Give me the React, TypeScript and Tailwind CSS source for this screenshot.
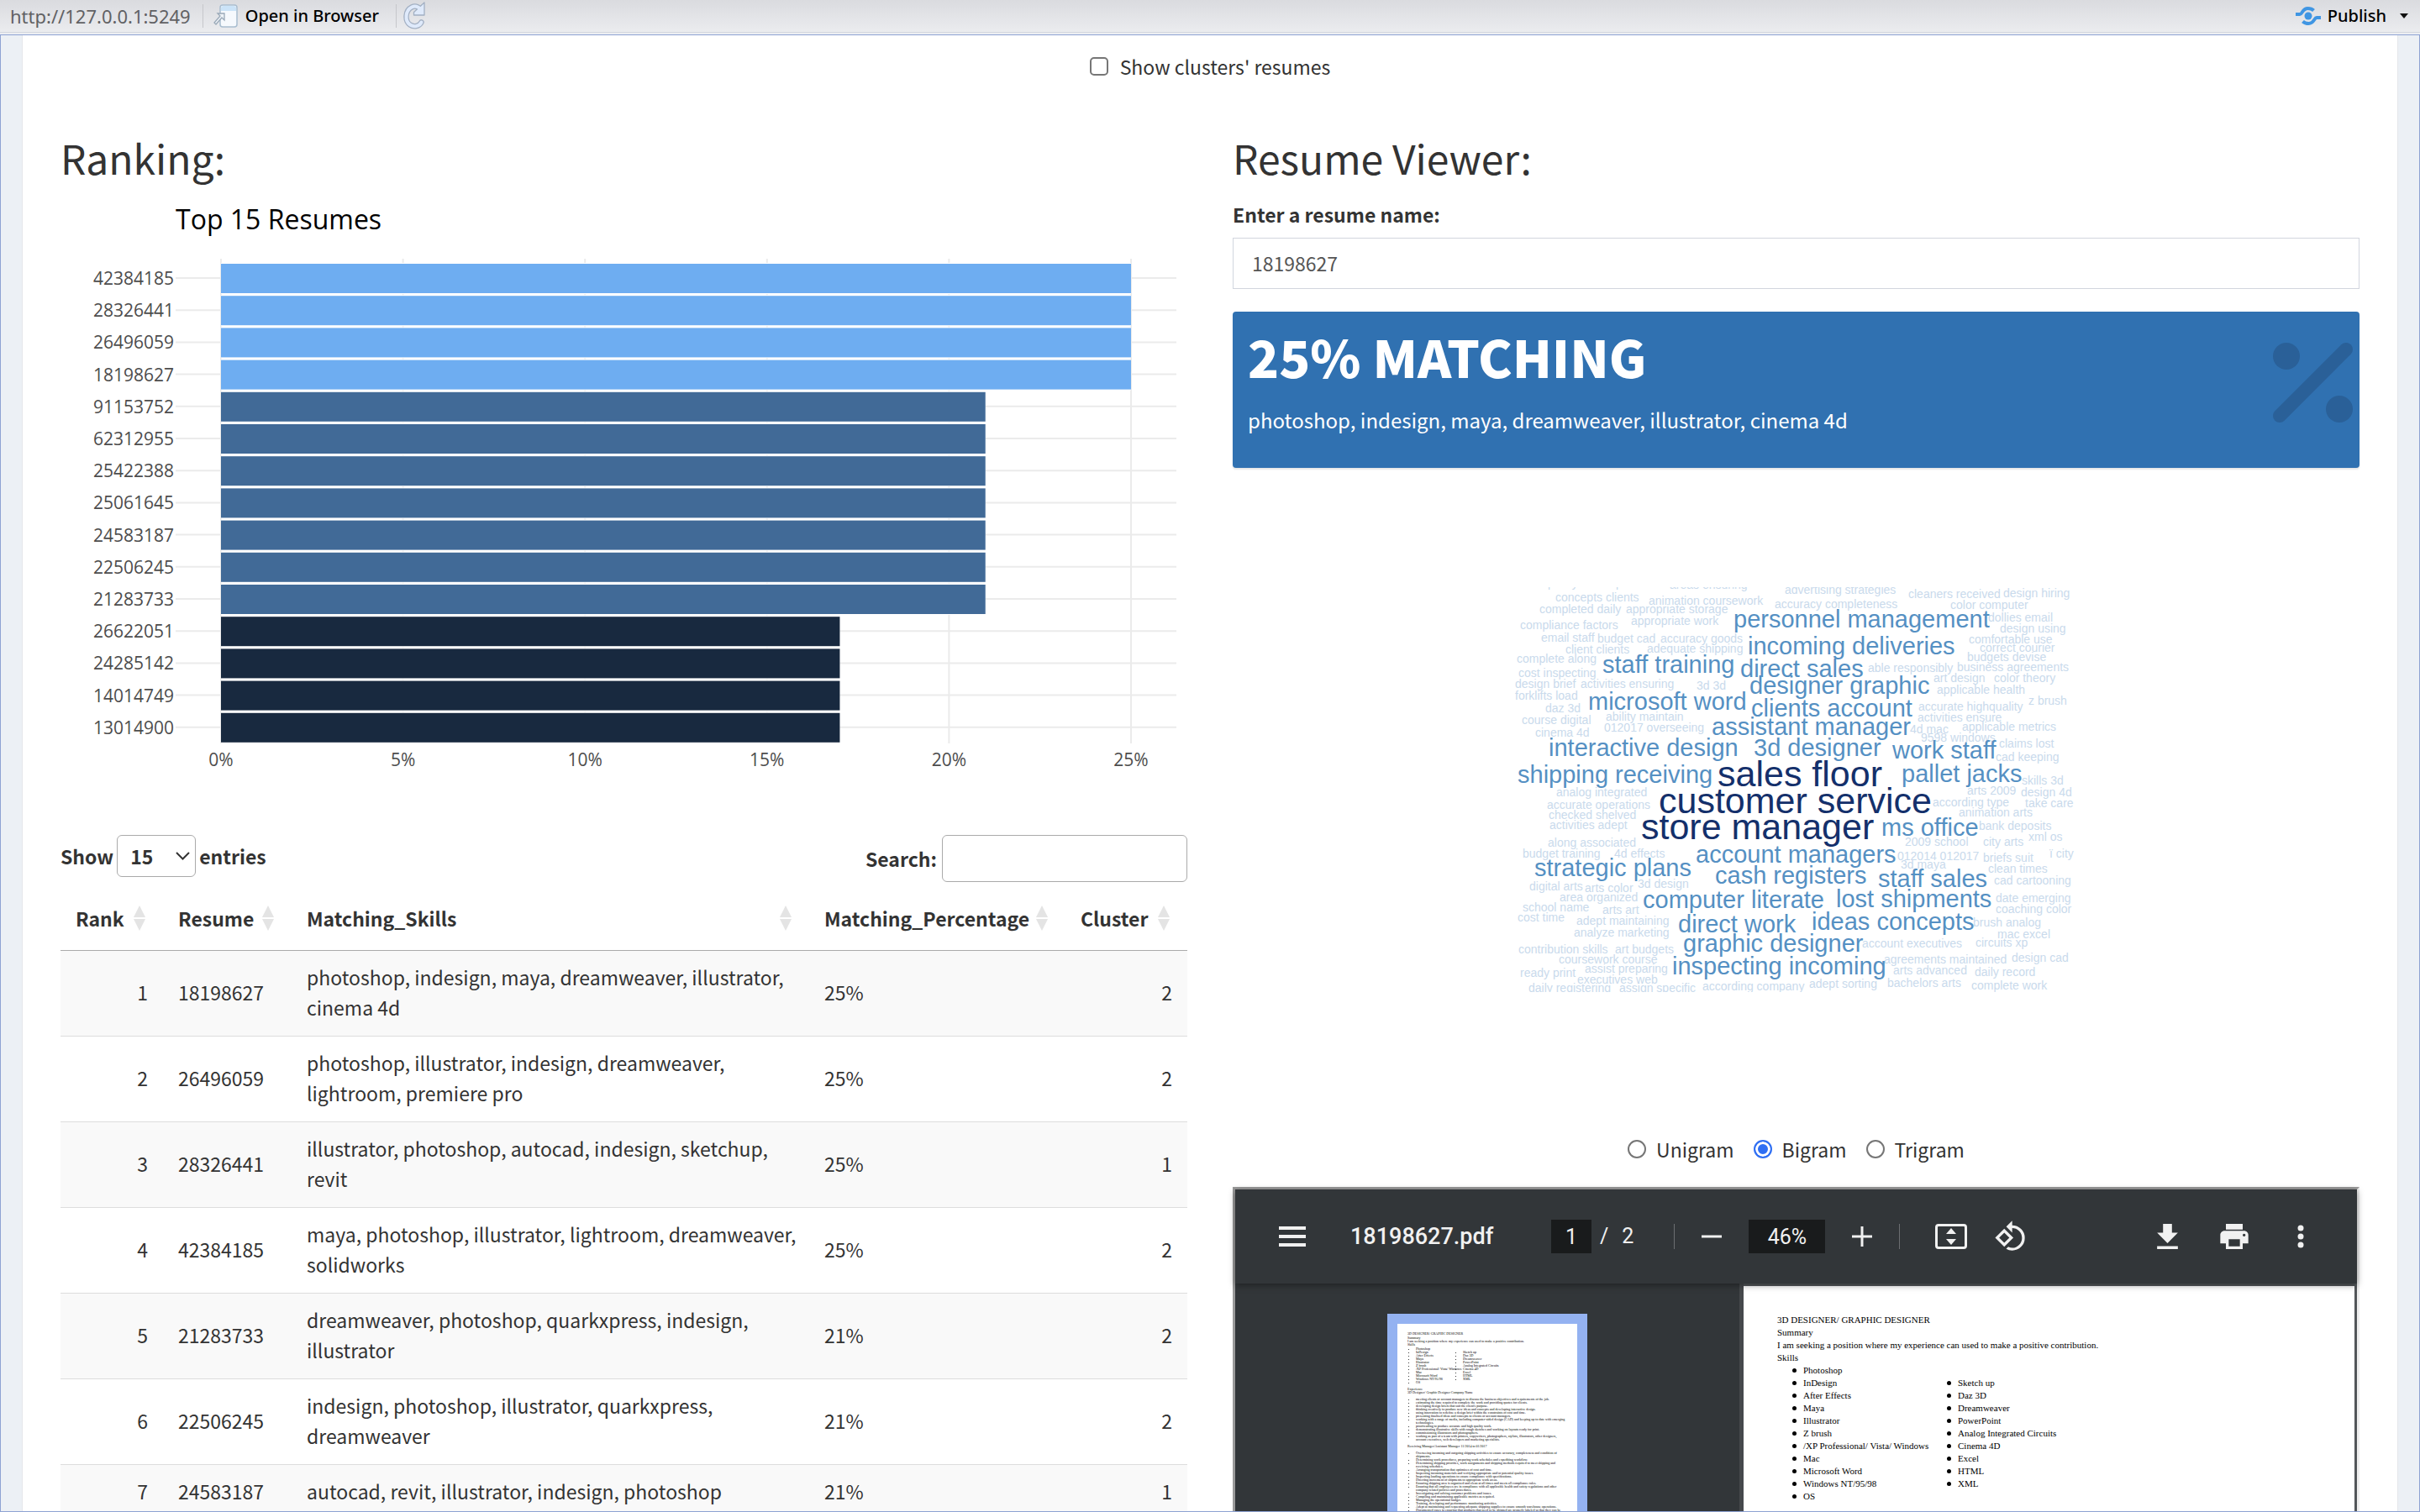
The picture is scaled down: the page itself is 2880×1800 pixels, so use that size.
import React from "react";

const ranking = [
  { name: "42384185", pct: 25 },
  { name: "28326441", pct: 25 },
  { name: "26496059", pct: 25 },
  { name: "18198627", pct: 25 },
  { name: "91153752", pct: 21 },
  { name: "62312955", pct: 21 },
  { name: "25422388", pct: 21 },
  { name: "25061645", pct: 21 },
  { name: "24583187", pct: 21 },
  { name: "22506245", pct: 21 },
  { name: "21283733", pct: 21 },
  { name: "26622051", pct: 17 },
  { name: "24285142", pct: 17 },
  { name: "14014749", pct: 17 },
  { name: "13014900", pct: 17 },
];

const barColor: Record<number, string> = { 25: "#6eadf1", 21: "#416a97", 17: "#18293f" };

const rows = [
  [1, "18198627", "photoshop, indesign, maya, dreamweaver, illustrator, cinema 4d", "25%", 2],
  [2, "26496059", "photoshop, illustrator, indesign, dreamweaver, lightroom, premiere pro", "25%", 2],
  [3, "28326441", "illustrator, photoshop, autocad, indesign, sketchup, revit", "25%", 1],
  [4, "42384185", "maya, photoshop, illustrator, lightroom, dreamweaver, solidworks", "25%", 2],
  [5, "21283733", "dreamweaver, photoshop, quarkxpress, indesign, illustrator", "21%", 2],
  [6, "22506245", "indesign, photoshop, illustrator, quarkxpress, dreamweaver", "21%", 2],
  [7, "24583187", "autocad, revit, illustrator, indesign, photoshop", "21%", 1],
] as const;

type Word = [string, number, number];

const largeWords: Word[] = [
  ["sales floor", 248, 237],
  ["customer service", 178, 269],
  ["store manager", 157, 300],
];

const mediumWords: Word[] = [
  ["personnel management", 267, 48],
  ["incoming deliveries", 284, 80],
  ["staff training", 111, 102],
  ["direct sales", 275, 107],
  ["designer graphic", 286, 127],
  ["microsoft word", 94, 146],
  ["clients account", 288, 154],
  ["assistant manager", 241, 176],
  ["interactive design", 47, 201],
  ["3d designer", 291, 201],
  ["work staff", 456, 204],
  ["shipping receiving", 10, 233],
  ["pallet jacks", 467, 232],
  ["ms office", 443, 296],
  ["account managers", 222, 328],
  ["strategic plans", 30, 344],
  ["cash registers", 245, 353],
  ["staff sales", 439, 357],
  ["computer literate", 159, 382],
  ["lost shipments", 389, 381],
  ["direct work", 201, 411],
  ["ideas concepts", 360, 408],
  ["graphic designer", 207, 434],
  ["inspecting incoming", 194, 461],
];

const smallWords: Word[] = [
  ["policy develop", 46, 0],
  ["areas ensuring", 191, 2],
  ["concepts clients", 55, 17],
  ["animation coursework", 166, 21],
  ["completed daily", 36, 31],
  ["appropriate storage", 139, 31],
  ["appropriate work", 145, 45],
  ["compliance factors", 13, 50],
  ["email staff", 38, 65],
  ["budget cad", 105, 66],
  ["accuracy goods", 180, 66],
  ["client clients", 67, 79],
  ["adequate shipping", 164, 78],
  ["complete along", 9, 90],
  ["cost inspecting", 11, 107],
  ["design brief", 7, 120],
  ["activities ensuring", 85, 120],
  ["3d 3d", 223, 122],
  ["forklifts load", 7, 134],
  ["daz 3d", 43, 149],
  ["course digital", 15, 163],
  ["ability maintain", 115, 159],
  ["012017 overseeing", 113, 172],
  ["cinema 4d", 31, 178],
  ["advertising strategies", 328, 8],
  ["accuracy completeness", 316, 25],
  ["cleaners received", 475, 13],
  ["design hiring", 588, 12],
  ["color computer", 525, 26],
  ["dollies email", 570, 41],
  ["design using", 584, 54],
  ["comfortable use", 547, 67],
  ["correct courier", 560, 77],
  ["budgets devise", 545, 88],
  ["able responsibly", 427, 101],
  ["business agreements", 533, 100],
  ["art design", 505, 113],
  ["color theory", 577, 113],
  ["applicable health", 509, 127],
  ["z brush", 618, 140],
  ["accurate highquality", 487, 147],
  ["activities ensure", 486, 160],
  ["4d mac", 477, 174],
  ["applicable metrics", 539, 171],
  ["9598 windows", 490, 184],
  ["claims lost", 583, 191],
  ["cad keeping", 579, 207],
  ["skills 3d", 610, 235],
  ["analog integrated", 56, 249],
  ["accurate operations", 45, 264],
  ["checked shelved", 47, 276],
  ["activities adept", 48, 288],
  ["along associated", 46, 309],
  ["budget training", 16, 322],
  ["4d effects", 125, 322],
  ["digital arts", 24, 361],
  ["arts color", 90, 363],
  ["3d design", 153, 358],
  ["area organized", 60, 374],
  ["school name", 16, 386],
  ["arts art", 111, 389],
  ["cost time", 10, 398],
  ["adept maintaining", 80, 402],
  ["analyze marketing", 77, 416],
  ["contribution skills", 11, 436],
  ["art budgets", 126, 436],
  ["coursework course", 59, 448],
  ["assist preparing", 90, 459],
  ["ready print", 13, 464],
  ["executives web", 81, 472],
  ["daily registering", 23, 482],
  ["assign specific", 131, 482],
  ["according company", 230, 480],
  ["arts 2009", 545, 247],
  ["design 4d", 609, 249],
  ["according type", 504, 261],
  ["take care", 614, 262],
  ["animation arts", 535, 273],
  ["bank deposits", 559, 289],
  ["2009 school", 471, 308],
  ["city arts", 564, 308],
  ["xml os", 618, 302],
  ["012014 012017", 462, 325],
  ["3d maya", 466, 335],
  ["briefs suit", 564, 327],
  ["ï city", 643, 322],
  ["clean times", 570, 340],
  ["cad cartooning", 577, 354],
  ["date emerging", 579, 375],
  ["coaching color", 579, 388],
  ["brush analog", 552, 404],
  ["mac excel", 581, 418],
  ["account executives", 420, 429],
  ["circuits xp", 555, 428],
  ["agreements maintained", 446, 448],
  ["design cad", 598, 446],
  ["arts advanced", 457, 461],
  ["daily record", 554, 463],
  ["adept sorting", 357, 477],
  ["bachelors arts", 450, 476],
  ["complete work", 550, 479],
];

const skillsLeft = ["InDesign", "After Effects", "Maya", "Illustrator", "Z brush", "/XP Professional/ Vista/ Windows", "Mac", "Microsoft Word", "Windows NT/95/98", "OS"];
const skillsRight = ["Sketch up", "Daz 3D", "Dreamweaver", "PowerPoint", "Analog Integrated Circuits", "Cinema 4D", "Excel", "HTML", "XML"];

const designerDuties = [
  "meeting clients or account managers to discuss the business objectives and requirements of the job.",
  "estimating the time required to complete the work and providing quotes for clients.",
  "developing design briefs that suit the client's purpose.",
  "thinking creatively to produce new ideas and concepts and developing interactive design.",
  "using innovation to redefine a design brief within the constraints of cost and time.",
  "presenting finalised ideas and concepts to clients or account managers.",
  "working with a range of media, including computer-aided design (CAD) and keeping up to date with emerging technologies.",
  "proofreading to produce accurate and high quality work.",
  "demonstrating illustrative skills with rough sketches and working on layouts ready for print.",
  "commissioning illustrators and photographers.",
  "working as part of a team with printers, copywriters, photographers, stylists, illustrators, other designers, account executives, web developers and marketing specialists.",
];

const managerDuties = [
  "Overseeing incoming and outgoing shipping activities to ensure accuracy, completeness and condition of shipments.",
  "Determining work procedures, preparing work schedules and expediting workflow.",
  "Determining shipping priorities, work assignments and shipping methods required to meet shipping and receiving schedules.",
  "Arranging transportation that optimizes of cost and time.",
  "Inspecting incoming materials and verifying appropriate and/or potential quality issues.",
  "Inspecting loading operations to ensure compliance with specifications.",
  "Directing movement of shipments to appropriate work areas.",
  "Ensuring shipping area is organized and clean at all times and meets all compliance rules.",
  "Ensuring that all employees are in compliance with all applicable health and safety regulations and other company related policies and procedures.",
  "Investigating and solving customer problems and issues.",
  "Compiling and maintaining applicable metrics as required.",
  "Managing the operational budget.",
  "Training, developing and performance monitoring activities.",
  "Adept at maintaining and requesting adequate shipping supplies to ensure smooth warehouse operations.",
  "Documented cases to ensuring that products that need to be shipped are properly labeled so that they can be delivered to the correct",
];

function TopBar() {
  return (
    <header className="flex h-[38px] shrink-0 items-center bg-linear-to-b from-[#dadbdf] to-[#ebecef] pr-3 pl-3 font-['Noto_Sans'] text-[20px] text-black">
      <span className="text-[22px] text-[#616164]">http://127.0.0.1:5249</span>
      <span className="ml-[14px] h-7 w-px bg-[#c6c7cb]" />
      <button className="ml-3 flex items-center gap-2 font-medium">
        <svg width="30" height="28" viewBox="0 0 30 28" fill="none">
          <rect x="8" y="1" width="20" height="26" rx="3" fill="#f6f9fd" stroke="#a9bdd0" strokeWidth="1.5" />
          <path d="M9 8V5a3 3 0 0 1 3-3h12a3 3 0 0 1 3 3v3z" fill="#cbe3f8" />
          <path d="M5 11h8v8l-3-3-7 8-2-2 7-8z" fill="#eef2f7" stroke="#9aa9b8" strokeWidth="1.3" />
        </svg>
        Open in Browser
      </button>
      <span className="ml-5 h-7 w-px bg-[#c6c7cb]" />
      <button aria-label="Refresh" className="ml-2">
        <svg width="28" height="36" viewBox="0 0 28 36" fill="none">
          <path d="M20 9.500C17 6.500 13 6 10 7.500C2 11.500 1.500 24 8 28.500C12.500 31.500 19 30.500 21.500 25.500" stroke="#a3b0c3" strokeWidth="6.500" strokeLinecap="round" />
          <path d="M25 2v15H12.500v-3.500z" fill="#dfeafb" stroke="#a3b0c3" strokeWidth="1.300" strokeLinejoin="round" />
          <path d="M20 9.500C17 6.500 13 6 10 7.500C2 11.500 1.500 24 8 28.500C12.500 31.500 19 30.500 21.500 25.500" stroke="#dfeafb" strokeWidth="4" strokeLinecap="round" />
        </svg>
      </button>
      <button className="ml-auto flex items-center gap-2 font-medium">
        <svg width="30" height="24" viewBox="0 0 30 24" fill="none" stroke="#4096e3" strokeWidth="4">
          <circle cx="15" cy="12" r="4.500" fill="#4096e3" stroke="none" />
          <path d="M0 10H5C8 10 8 3 14.500 3C18 3 20 4 21.500 5.500" />
          <path d="M30 14H25C22 14 22 21 15.500 21C12 21 10 20 8.500 18.500" />
        </svg>
        Publish
        <svg className="ml-2 mr-[2px]" width="10" height="6" viewBox="0 0 10 6">
          <path d="M0 0h10L5 6z" fill="#111" />
        </svg>
      </button>
    </header>
  );
}

function RankingChart() {
  const x0 = 191;
  const perPct = 43.32;
  return (
    <svg viewBox="0 0 1341 740" className="h-auto w-full font-['Open_Sans']" role="img" aria-label="Top 15 Resumes">
      <text x="137" y="56" fontSize="32" fill="#000">Top 15 Resumes</text>
      {ranking.map((r, i) => (
        <line key={r.name} x1="137" x2="1328" y1={114 + i * 38.2} y2={114 + i * 38.2} stroke="#ebebeb" strokeWidth="2" />
      ))}
      {[0, 5, 10, 15, 20, 25].map((t) => (
        <g key={t}>
          <line x1={x0 + t * perPct} x2={x0 + t * perPct} y1="91" y2="668" stroke="#ebebeb" strokeWidth="2" />
          <text x={x0 + t * perPct} y="695" fontSize="21" fill="#4d4d4d" textAnchor="middle">{t}%</text>
        </g>
      ))}
      {ranking.map((r, i) => (
        <g key={r.name}>
          <rect x={x0} y={96 + i * 38.2} width={r.pct * perPct} height="37" fill="#fff" />
          <rect x={x0} y={97 + i * 38.2} width={r.pct * perPct} height="35" fill={barColor[r.pct]} />
          <text x="135" y={122 + i * 38.2} fontSize="21" fill="#4d4d4d" textAnchor="end">{r.name}</text>
        </g>
      ))}
    </svg>
  );
}

function SortIcon() {
  return (
    <svg width="14" height="30" viewBox="0 0 14 30" fill="#e4e4e4" className="shrink-0">
      <path d="M7 0l7 14H0z" />
      <path d="M7 30l7-14H0z" />
    </svg>
  );
}

function RankingTable() {
  const heads: [string, string][] = [
    ["Rank", "w-[122px]"],
    ["Resume", "w-[153px]"],
    ["Matching_Skills", ""],
    ["Matching_Percentage", "w-[305px]"],
    ["Cluster", "w-[145px]"],
  ];
  return (
    <section>
      <div className="mt-[37px] flex items-start justify-between font-bold">
        <label className="flex h-[50px] items-center gap-1">
          Show
          <span className="relative">
            <select defaultValue="15" className="h-[50px] w-[94px] appearance-none rounded-md border border-[#aaa] bg-white pl-[15px] font-bold">
              <option>15</option>
              <option>25</option>
              <option>50</option>
            </select>
            <svg className="pointer-events-none absolute top-[20px] right-[7px]" width="17" height="10" viewBox="0 0 17 10" fill="none" stroke="#333" strokeWidth="2">
              <path d="M1 1l7.500 7.500L16 1" />
            </svg>
          </span>
          entries
        </label>
        <label className="flex items-center gap-[6px]">
          Search:
          <input type="search" className="h-[56px] w-[292px] rounded-md border border-[#aaa] bg-white px-2" />
        </label>
      </div>
      <table className="mt-[10px] w-full table-fixed border-collapse">
        <thead>
          <tr className="h-[71px] border-b border-[#aaa]">
            {heads.map(([h, w]) => (
              <th key={h} className={w + " pt-0 pr-[21px] pb-1 pl-[18px]"}>
                <button className="flex w-full items-center justify-between font-bold">
                  {h}
                  <SortIcon />
                </button>
              </th>
            ))}
          </tr>
        </thead>
        <tbody>
          {rows.map(([rank, resume, skills, pct, cluster]) => (
            <tr key={rank} className="border-b border-[#ddd] odd:bg-[#f9f9f9]">
              <td className="px-[18px] pt-[13px] pb-4 text-right">{rank}</td>
              <td className="px-[18px] pt-[13px] pb-4">{resume}</td>
              <td className="pt-[13px] pr-2 pb-4 pl-[18px]">{skills}</td>
              <td className="px-[18px] pt-[13px] pb-4">{pct}</td>
              <td className="px-[18px] pt-[13px] pb-4 text-right">{cluster}</td>
            </tr>
          ))}
        </tbody>
      </table>
    </section>
  );
}

function Words({ words, size, color }: { words: Word[]; size: number; color: string }) {
  return (
    <g fontSize={size} fill={color}>
      {words.map(([t, x, y]) => (
        <text key={t + x} x={x} y={y}>{t}</text>
      ))}
    </g>
  );
}

function WordCloud() {
  return (
    <svg width="680" height="482" viewBox="2 0 680 482" className="mx-auto mt-[142px] block overflow-hidden font-['Liberation_Sans']" role="img" aria-label="Word cloud">
      <Words words={smallWords} size={14} color="#c9daec" />
      <Words words={mediumWords} size={29} color="#5590c3" />
      <Words words={largeWords} size={43} color="#14306b" />
    </svg>
  );
}

function NgramChoice() {
  return (
    <fieldset className="mt-[169px] flex h-9 items-center justify-center gap-[23px]">
      {["Unigram", "Bigram", "Trigram"].map((n) => (
        <label key={n} className="flex items-center gap-3">
          <input
            type="radio"
            name="ngram"
            defaultChecked={n === "Bigram"}
            className="size-[22px] appearance-none rounded-full border-2 border-[#767676] bg-white checked:border-[#2f6ff3] checked:bg-[#2f6ff3] checked:shadow-[inset_0_0_0_3px_white]"
          />
          {n}
        </label>
      ))}
    </fieldset>
  );
}

function PdfToolbar() {
  return (
    <div className="relative z-10 flex h-[112px] items-center bg-[#323639] pr-[63px] pl-[52px] font-['Roboto'] text-[25px] text-[#f1f1f1] shadow-[0_2px_8px_rgba(0,0,0,0.4)]">
      <button aria-label="Menu">
        <svg width="32" height="24" viewBox="0 0 32 24" fill="#f1f1f1">
          <path d="M0 0h32v4H0zM0 10h32v4H0zM0 20h32v4H0z" />
        </svg>
      </button>
      <span className="ml-[53px] w-[176px] text-[27px] font-medium">18198627.pdf</span>
      <input aria-label="Page" defaultValue="1" className="ml-[63px] h-10 w-12 bg-[#191b1c] text-center" />
      <span className="ml-[10px]">/</span>
      <span className="ml-[16px]">2</span>
      <span className="ml-[48px] h-[30px] w-px bg-[#6b6e71]" />
      <button aria-label="Zoom out" className="ml-8">
        <svg width="24" height="24" viewBox="0 0 24 24" fill="#f1f1f1"><path d="M0 10.500h24v3H0z" /></svg>
      </button>
      <input aria-label="Zoom" defaultValue="46%" className="ml-8 h-10 w-[91px] bg-[#191b1c] text-center" />
      <button aria-label="Zoom in" className="ml-8">
        <svg width="24" height="24" viewBox="0 0 24 24" fill="#f1f1f1"><path d="M0 10.500h24v3H0z" /><path d="M10.500 0h3v24h-3z" /></svg>
      </button>
      <span className="ml-8 h-[30px] w-px bg-[#6b6e71]" />
      <button aria-label="Fit to page" className="ml-[42px]">
        <svg width="38" height="30" viewBox="0 0 38 30" fill="#f1f1f1">
          <rect x="1.500" y="1.500" width="35" height="27" rx="2.500" fill="none" stroke="#f1f1f1" strokeWidth="3" />
          <path d="M19 5l6 7H13zM19 25l6-7H13z" />
        </svg>
      </button>
      <button aria-label="Rotate" className="ml-8">
        <svg width="40" height="40" viewBox="0 0 24 24" fill="#f1f1f1">
          <path d="M7.340 6.410L.860 12.900l6.490 6.480 6.490-6.480-6.500-6.490zM3.690 12.900l3.660-3.660L11 12.900l-3.660 3.660-3.650-3.660zm15.670-6.260A8.950 8.950 0 0 0 13 4V.760L8.760 5 13 9.240V6c1.790 0 3.580.680 4.950 2.050a7.007 7.007 0 0 1 0 9.900 6.973 6.973 0 0 1-7.790 1.440l-1.490 1.490C10.020 21.620 11.510 22 13 22c2.300 0 4.610-.880 6.360-2.640a8.980 8.980 0 0 0 0-12.720z" />
        </svg>
      </button>
      <button aria-label="Download" className="ml-auto">
        <svg width="25" height="30" viewBox="5 3 14 17" fill="#f1f1f1">
          <path d="M19 9h-4V3H9v6H5l7 7 7-7zM5 18v2h14v-2H5z" />
        </svg>
      </button>
      <button aria-label="Print" className="ml-[50px]">
        <svg width="34" height="30" viewBox="2 3 20 18" fill="#f1f1f1">
          <path d="M19 8H5c-1.660 0-3 1.340-3 3v6h4v4h12v-4h4v-6c0-1.660-1.340-3-3-3zm-3 11H8v-5h8v5zm3-7c-.550 0-1-.450-1-1s.450-1 1-1 1 .450 1 1-.450 1-1 1zm-1-9H6v4h12V3z" />
        </svg>
      </button>
      <button aria-label="More" className="ml-[58px]">
        <svg width="8" height="28" viewBox="0 0 8 28" fill="#f1f1f1">
          <circle cx="4" cy="4" r="3.500" />
          <circle cx="4" cy="14" r="3.500" />
          <circle cx="4" cy="24" r="3.500" />
        </svg>
      </button>
    </div>
  );
}

function Thumbnail() {
  const list = "ml-[10px] list-outside list-disc";
  return (
    <div className="w-[238px] overflow-hidden border-[12px] border-b-0 border-[#94b2f1] bg-white">
      <div className="aspect-[17/22] pt-[10px] pr-3 pl-3 font-['Liberation_Serif'] text-[4px] leading-[4px] text-black">
        <p>3D DESIGNER/ GRAPHIC DESIGNER</p>
        <p className="mt-px">Summary</p>
        <p>I am seeking a position where my experience can used to make a positive contribution.</p>
        <p>Skills</p>
        <div className="mt-px flex gap-4">
          <ul className={list + " w-[40px] whitespace-nowrap"}>
            <li>Photoshop</li>
            {skillsLeft.map((s) => <li key={s}>{s}</li>)}
          </ul>
          <ul className="list-outside list-disc pt-1 whitespace-nowrap">
            {skillsRight.map((s) => <li key={s}>{s}</li>)}
          </ul>
        </div>
        <p className="mt-1">Experience</p>
        <p>3D Designer/ Graphic Designer Company Name</p>
        <ul className={list + " mt-1"}>
          {designerDuties.map((s) => <li key={s}>{s}</li>)}
        </ul>
        <p className="mt-1">Receiving Manager/Assistant Manager 11/2014 to 01/2017</p>
        <ul className={list + " mt-1"}>
          {managerDuties.map((s) => <li key={s}>{s}</li>)}
        </ul>
      </div>
    </div>
  );
}

function SkillList({ items }: { items: string[] }) {
  return (
    <ul>
      {items.map((s) => (
        <li key={s} className="flex items-center gap-2 whitespace-nowrap">
          <span className="size-[5px] rounded-full bg-black" />
          {s}
        </li>
      ))}
    </ul>
  );
}

function PdfPage() {
  return (
    <div className="aspect-[17/22] bg-white pt-[33px] pl-[40px] font-['Liberation_Serif'] text-[11px] leading-[15px] text-black">
      <p>3D DESIGNER/ GRAPHIC DESIGNER</p>
      <p>Summary</p>
      <p>I am seeking a position where my experience can used to make a positive contribution.</p>
      <p>Skills</p>
      <div className="flex pl-[18px]">
        <div className="w-[184px]">
          <SkillList items={["Photoshop", ...skillsLeft]} />
        </div>
        <div className="pt-[15px]">
          <SkillList items={skillsRight} />
        </div>
      </div>
    </div>
  );
}

function ResumeViewer() {
  return (
    <section className="min-w-0">
      <h2 className="text-[48px] leading-[60px]">Resume Viewer:</h2>
      <label htmlFor="resume" className="mt-[20px] block font-bold">Enter a resume name:</label>
      <input id="resume" defaultValue="18198627" className="mt-[10px] block h-[61px] w-full border border-[#d2d6de] bg-white px-[22px] pb-[2px] text-[#555]" />
      <div className="relative mt-[27px] h-[186px] rounded-[4px] bg-[#3071b1] px-[18px] pt-[15px] text-white shadow-[0_2px_2px_rgba(0,0,0,0.1)]">
        <h3 className="text-[61px] leading-[76px] font-black">25% MATCHING</h3>
        <p className="mt-5 text-[24px]">photoshop, indesign, maya, dreamweaver, illustrator, cinema 4d</p>
        <svg className="absolute top-[37px] right-2" width="95" height="95" viewBox="0 0 95 95" fill="#2a6098">
          <circle cx="16" cy="16" r="16" />
          <circle cx="79" cy="79" r="16" />
          <path d="M8 87L87 8" stroke="#2a6098" strokeWidth="16" strokeLinecap="round" />
        </svg>
      </div>
      <WordCloud />
      <NgramChoice />
      <div className="mt-[27px] border-3 border-[#9a9a9a] border-r-[#eee]">
        <PdfToolbar />
        <div className="flex items-start bg-[#323639]">
          <div className="flex w-[600px] shrink-0 justify-center pt-9">
            <Thumbnail />
          </div>
          <div className="min-w-0 flex-1 border-l-[5px] border-[#46494c] bg-[#525659] pt-[3px] pr-[3px]">
            <PdfPage />
          </div>
        </div>
      </div>
    </section>
  );
}

export default function App() {
  return (
    <div className="flex h-screen flex-col overflow-hidden bg-[#ebecef] font-['Noto_Sans_CJK_SC',sans-serif] text-[23px] leading-9 text-[#333]">
      <TopBar />
      <div className="h-[3px] shrink-0 border-t border-[#d3d6de] bg-[#eceef2]" />
      <main className="min-h-0 flex-1 overflow-hidden border border-[#8ea3d3] bg-[#ecf0f5] px-[25px]">
        <div className="border-x border-[#e4e6ea] bg-white px-[45px] pt-[19px]">
          <label className="flex items-center justify-center gap-[14px]">
            <input type="checkbox" className="size-[22px] appearance-none rounded-[5px] border-2 border-[#767676] bg-white" />
            Show clusters' resumes
          </label>
          <div className="mt-[60px] grid grid-cols-2 items-start gap-[54px]">
            <div className="min-w-0">
              <h2 className="text-[48px] leading-[60px]">Ranking:</h2>
              <RankingChart />
              <RankingTable />
            </div>
            <ResumeViewer />
          </div>
        </div>
      </main>
    </div>
  );
}
